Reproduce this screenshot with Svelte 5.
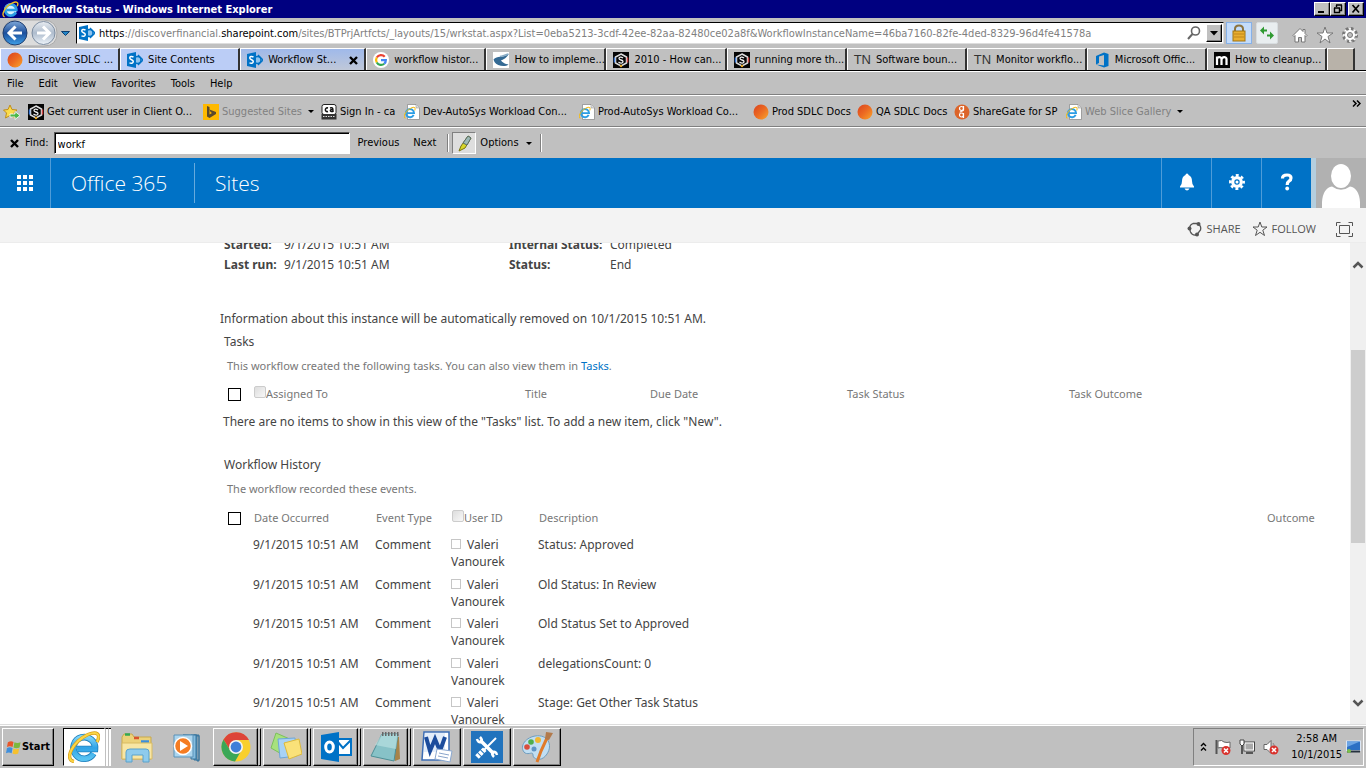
<script>
  const tabs = [
    { icon: 'orb', label: 'Discover SDLC ...', kind: 'blue' },
    { icon: 'sp', label: 'Site Contents', kind: 'blue' },
    { icon: 'sp', label: 'Workflow St...', kind: 'active' },
    { icon: 'google', label: 'workflow histor...', kind: 'pink' },
    { icon: 'bird', label: 'How to impleme...', kind: 'pink' },
    { icon: 'hex', label: '2010 - How can...', kind: 'pink' },
    { icon: 'hex', label: 'running more th...', kind: 'pink' },
    { icon: 'tn', label: 'Software boun...', kind: 'pink' },
    { icon: 'tn', label: 'Monitor workflo...', kind: 'pink' },
    { icon: 'office', label: 'Microsoft Offic...', kind: 'pink' },
    { icon: 'm', label: 'How to cleanup...', kind: 'pink' }
  ];
  const menus = ['File', 'Edit', 'View', 'Favorites', 'Tools', 'Help'];
  const favorites = [
    { icon: 'hex', label: 'Get current user in Client O...', w: 164 },
    { icon: 'bing', label: 'Suggested Sites', dim: true, menu: true, w: 107 },
    { icon: 'ca', label: 'Sign In - ca', w: 72 },
    { icon: 'page', label: 'Dev-AutoSys Workload Con...', w: 164 },
    { icon: 'page', label: 'Prod-AutoSys Workload Co...', w: 163 },
    { icon: 'orb', label: 'Prod SDLC Docs', w: 93 },
    { icon: 'orb', label: 'QA SDLC Docs', w: 86 },
    { icon: 'gate', label: 'ShareGate for SP', w: 101 },
    { icon: 'page', label: 'Web Slice Gallery', dim: true, menu: true, w: 112 }
  ];
  const events = ['Status: Approved', 'Old Status: In Review', 'Old Status Set to Approved', 'delegationsCount: 0', 'Stage: Get Other Task Status'];
  const taskbar = [
    { name: 'Internet Explorer', icon: 'ie', state: 'on', stack: 2 },
    { name: 'Explorer', icon: 'folder', state: 'flat', stack: 0 },
    { name: 'Media Player', icon: 'media', state: 'flat', stack: 0 },
    { name: 'Chrome', icon: 'chrome', state: 'up', stack: 1 },
    { name: 'Sticky Notes', icon: 'notes', state: 'up', stack: 1 },
    { name: 'Outlook', icon: 'outlook', state: 'up', stack: 1 },
    { name: 'Notepad', icon: 'notepad', state: 'up', stack: 1 },
    { name: 'Word', icon: 'word', state: 'up', stack: 0 },
    { name: 'Tools', icon: 'tools', state: 'up', stack: 0 },
    { name: 'Paint', icon: 'paint', state: 'up', stack: 0 }
  ];
  const scroll = { top: 16, size: 49 };
  let find = $state('workf');
</script>

{#snippet ieMark()}
  <path d="M26 21.500 A10.500 10.500 0 1 1 27 17 L9 17" fill="none" stroke="#2b9de4" stroke-width="5" />
  <path d="M5 30 C-3 28 5 10 20 3.500 C28 0 32 3 28.500 10" fill="none" stroke="#f4bd1c" stroke-width="2.600" />
{/snippet}

{#snippet glyph(name, size)}
  <svg class="glyph" width={size} height={size} viewBox="0 0 32 32" aria-hidden="true">
    {#if name === 'orb'}
      <defs><linearGradient id="orb" x1="0" y1="0" x2="1" y2="1"><stop offset="0" stop-color="#d9421f" /><stop offset=".5" stop-color="#ec6a22" /><stop offset="1" stop-color="#f9a62c" /></linearGradient></defs>
      <circle cx="16" cy="16" r="15" fill="url(#orb)" />
    {:else if name === 'sp'}
      <path d="M17 6 L31 16 L17 26Z" fill="#8fc4ee" /><circle cx="21" cy="16" r="7" fill="none" stroke="#0072c6" stroke-width="3" /><path d="M22 6 L32 16 L22 26" fill="none" stroke="#0072c6" stroke-width="2.6" />
      <path d="M0 4 L18 0 V32 L0 28Z" fill="#0072c6" /><path d="M13 10 C9 8 5.500 9 5.500 12 C5.500 16 12.500 15 12.500 19 C12.500 23 8 23.500 5 21.500" fill="none" stroke="#fff" stroke-width="3" />
    {:else if name === 'google'}
      <circle cx="16" cy="16" r="16" fill="#fff" />
      <g fill="none" stroke-width="4.500"><path d="M23.500 9.500 A10 10 0 0 0 7.500 11" stroke="#ea4335" /><path d="M7.500 11 A10 10 0 0 0 7.500 21" stroke="#fbbc05" /><path d="M7.500 21 A10 10 0 0 0 22.500 23.500" stroke="#34a853" /><path d="M22.500 23.500 A10 10 0 0 0 25.700 16 H16" stroke="#4285f4" /></g>
    {:else if name === 'bird'}
      <rect width="32" height="32" fill="#fff" /><path d="M1 15 C8 6 20 13 31 4 C28 12 20 15 16 17 C22 24 28 24 31 25 C24 31 8 28 3 20Z" fill="#346a94" /><path d="M14 9 C20 7 26 6 31 4" stroke="#87abc5" stroke-width="3" fill="none" />
    {:else if name === 'hex'}
      <rect width="32" height="32" fill="#050505" /><path d="M16 4 L27 10 V22 L16 28 L5 22 V10Z" fill="none" stroke="#ddd" stroke-width="3" /><path d="M20 12 C16 9 12 10 12 13 C12 17 20 15 20 19 C20 23 15 23 11 20" fill="none" stroke="#eee" stroke-width="2.600" /><path d="M3 21 V11" stroke="#3d7bd8" stroke-width="3" /><path d="M29 21 V11" stroke="#cf4444" stroke-width="3" /><circle cx="16" cy="28" r="2.500" fill="#e5a623" />
    {:else if name === 'office'}
      <path d="M4 8 L20 1 L29 4 V28 L20 31 L4 25 L20 27 V6 L10 9 V22 L4 25Z" fill="#0072c6" />
    {:else if name === 'm'}
      <rect width="32" height="32" fill="#050505" /><path d="M6 26 V9 M6 15 C6 9 15 9 15 14 V26 M15 15 C16 9 25 9 25 14 V26" stroke="#fff" stroke-width="4.500" fill="none" />
    {:else if name === 'bing'}
      <rect width="32" height="32" fill="#ffb900" /><path d="M8 4 L13 6 V21 L18 18 L15 16 L13 11 L26 16 V20 L13 28 L8 25Z" fill="#5b4a2c" />
    {:else if name === 'ca'}
      <rect x="2" y="1" width="28" height="20" rx="4" fill="#fff" stroke="#222" stroke-width="2" /><path d="M14 8 C7 6 7 17 14 15 M18 8 C24 6 24 9 24 16 M24 11 C17 10 17 16 24 15" fill="none" stroke="#111" stroke-width="3" /><path d="M1 20 H31 V31 H1Z" fill="#333" /><path d="M4 25 H28" stroke="#ddd" stroke-width="2" stroke-dasharray="3 2" />
    {:else if name === 'page'}
      <path d="M7 1 H24 L31 8 V31 H7Z" fill="#fff" stroke="#8a8a8a" stroke-width="1.500" /><path d="M24 1 V8 H31" fill="#ddd" stroke="#8a8a8a" /><g transform="translate(-1 5) scale(.78)">{@render ieMark()}</g>
    {:else if name === 'gate'}
      <circle cx="16" cy="16" r="15" fill="#dc6429" /><g fill="none" stroke="#fff" stroke-width="2.400"><circle cx="15" cy="9" r="4" /><circle cx="15" cy="22" r="4" /><path d="M19 4 V12 C19 15 12 14 12 17 M19 18 V28" /></g>
    {:else if name === 'ie'}
      <defs><linearGradient id="ieblue" x1="0" y1="0" x2="0" y2="1"><stop offset="0" stop-color="#7fd4f8" /><stop offset=".5" stop-color="#2fa3e6" /><stop offset="1" stop-color="#58c3f2" /></linearGradient></defs>
      <path d="M25.500 22.500 A10.800 10.800 0 1 1 27 18 L9 18" fill="none" stroke="#1d7fbd" stroke-width="6.600" />
      <path d="M25.500 22.500 A10.800 10.800 0 1 1 27 18.010 L9 18" fill="none" stroke="url(#ieblue)" stroke-width="5" />
      <path d="M6 30.500 C-4 29 4 11 20 3.500 C29 0 33 3 29 11" fill="none" stroke="#d99c14" stroke-width="3.400" />
      <path d="M6 30.500 C-4 29 4 11 20 3.500 C29 0 33 3 29 11" fill="none" stroke="#fbd545" stroke-width="2" />
    {:else if name === 'folder'}
      <path d="M1 6 L3 3 H11 L13 6 H30 V28 H1Z" fill="#ecd27a" stroke="#c8a94c" /><path d="M4 3.500 H9" stroke="#34a853" stroke-width="2.500" /><path d="M13 7 H18" stroke="#d9532c" stroke-width="2.500" /><path d="M20 10.500 H28" stroke="#3b8ede" stroke-width="2.500" /><path d="M1 12 H31 V28 H1Z" fill="#f8e6a4" stroke="#d8bb62" /><path d="M5 31 V21 Q5 18 9 18 H25 Q28 18 28 21 V31 H22 V24 H11 V31Z" fill="#8ecbec" stroke="#5ba2cc" />
    {:else if name === 'media'}
      <path d="M12 4 H26 V30 L28 30 V5Z M23 4 H28 V29 H23Z" fill="#5d9cc8" stroke="#39749c" /><path d="M20 4 H25 V28 H20Z" fill="#85bde0" stroke="#39749c" /><path d="M3 4 H22 V26 H3Z" fill="#acd5ee" stroke="#5b92b8" /><circle cx="12" cy="15" r="8.500" fill="#f57c22" stroke="#fff" stroke-width="1.500" /><path d="M9 10 L17 15 L9 20Z" fill="#fff" />
    {:else if name === 'chrome'}
      <circle cx="16" cy="16" r="14.500" fill="#f9cf2c" /><path d="M16 16 L3.500 8.500 A14.500 14.500 0 0 1 29 9 H16Z" fill="#dd4438" /><path d="M3.500 8.500 L10 19 L16 9Z" fill="#dd4438" /><path d="M10 19 L3.500 8.500 A14.500 14.500 0 0 0 15 30.500 L21 20Z" fill="#3aa757" /><circle cx="16" cy="16" r="7" fill="#f4f4f4" /><circle cx="16" cy="16" r="5.400" fill="#3f7fd8" />
    {:else if name === 'notes'}
      <path d="M6 2 L22 9 L15 25 L1 17Z" fill="#a7e17d" stroke="#7cc05c" /><path d="M8 8 L25 7 L27 25 L10 27Z" fill="#a8d2f5" stroke="#6da7d8" /><path d="M14 12 L29 8 L32 23 L19 28Z" fill="#fae179" stroke="#ddb93c" />
    {:else if name === 'outlook'}
      <path d="M17 8 H31 V24 H17Z" fill="#fff" stroke="#0072c6" stroke-width="2" /><path d="M17 10 L23 17 L31 9" fill="none" stroke="#0072c6" stroke-width="2" /><path d="M1 4 L19 1 V31 L1 28Z" fill="#0072c6" /><ellipse cx="9.500" cy="16" rx="3.800" ry="5" fill="none" stroke="#fff" stroke-width="3" />
    {:else if name === 'notepad'}
      <path d="M12 3 L29 6 L30 28 L25 30Z" fill="#a78348" /><path d="M12 3 H28 L24 30 L1 25Z" fill="#87c2c7" stroke="#4d8f96" /><path d="M12 3 H28 L26 18 L5 14Z" fill="#bfe4e5" opacity=".6" /><path d="M12 3 H29" stroke="#666" stroke-width="4" stroke-dasharray="1.500 1.500" />
    {:else if name === 'word'}
      <path d="M3 1 H28 V29 H1Z" fill="#fff" stroke="#3c6db5" stroke-width="1.500" /><path d="M4 2 H24 V21 H3Z" fill="#e3edfa" /><path d="M5 6 L9 20 L14 8 L19 20 L24 6" fill="none" stroke="#1c4c9c" stroke-width="4" /><path d="M16 18 L31 20 L29 31 L14 28Z" fill="#fff" stroke="#89a7d0" /><path d="M18 22 L28 24 M17 25 L27 27" stroke="#8aa5cb" />
    {:else if name === 'tools'}
      <rect width="32" height="32" fill="#2173bd" /><path d="M9 9 L23 23" stroke="#fff" stroke-width="3.500" /><path d="M25 7 L13 19" stroke="#fff" stroke-width="2" /><path d="M6 26 L14 18" stroke="#fff" stroke-width="5" stroke-dasharray="3 1" /><path d="M6 8 Q7 12 10 11 Q12 9 9 6" fill="none" stroke="#fff" stroke-width="2.500" /><path d="M26 24 Q25 20 22 21 Q20 23 23 26" fill="none" stroke="#fff" stroke-width="2.500" />
    {:else if name === 'paint'}
      <path d="M14 5 C27 3 32 14 26 23 C21 31 12 29 12 24 C12 20 8 24 4 22 C-2 17 3 7 14 5Z" fill="#c1def2" stroke="#6f9dbf" /><circle cx="6" cy="16" r="2.800" fill="#d94e3c" /><circle cx="10" cy="11" r="2.800" fill="#4fae4d" /><circle cx="17" cy="9" r="3" fill="#f1b732" /><circle cx="13" cy="18" r="2.500" fill="#5f94c6" /><path d="M16 31 L20 20 L26 7" stroke="#e07b2a" stroke-width="3" fill="none" /><path d="M24 8 L25 1 L32 2 L28 9Z" fill="#b27a4c" />
    {/if}
  </svg>
{/snippet}

<div class="screen">
  <header class="titlebar">
    <svg width="17" height="17" viewBox="0 0 32 32" aria-hidden="true"><circle cx="16" cy="16" r="12" fill="#d8f2fd" />{@render ieMark()}</svg>
    <h1>Workflow Status - Windows Internet Explorer</h1>
    <div class="winbtns">
      <button class="raised" aria-label="Minimize"><svg width="12" height="10" viewBox="0 0 12 10"><path d="M2 8 H8" stroke="#000" stroke-width="2" /></svg></button>
      <button class="raised" aria-label="Restore"><svg width="12" height="10" viewBox="0 0 12 10"><path d="M4 1 H10 M4.500 1 V3 M9.500 1 V6.500 H8 M2 4 H8 M2.500 4 V8.500 H7.500 V4" fill="none" stroke="#000" stroke-width="1.400" /></svg></button>
      <button class="raised close" aria-label="Close"><svg width="12" height="10" viewBox="0 0 12 10"><path d="M2.500 1 L9 8.500 M9 1 L2.500 8.500" stroke="#000" stroke-width="1.700" /></svg></button>
    </div>
  </header>

  <div class="address">
    <svg class="nav" width="72" height="30" viewBox="0 0 72 30" aria-hidden="true">
      <defs>
        <linearGradient id="back" x1="0" y1="0" x2="0" y2="1"><stop offset="0" stop-color="#7fa8d8" /><stop offset=".5" stop-color="#1c4f9c" /><stop offset="1" stop-color="#3ea0e8" /></linearGradient>
        <linearGradient id="fwd" x1="0" y1="0" x2="0" y2="1"><stop offset="0" stop-color="#e8ecf1" /><stop offset=".5" stop-color="#aebccd" /><stop offset="1" stop-color="#eef4fa" /></linearGradient>
      </defs>
      <path d="M13 2 H42 Q55 3 55 15 Q55 28 42 28 H13 Q1 27 1 15 Q1 3 13 2Z" fill="#dcdcdc" stroke="#aaa" />
      <circle cx="13" cy="15" r="12" fill="url(#back)" stroke="#203f70" />
      <path d="M13.500 8.500 L7 15 L13.500 21.500 M7.500 15 H20" fill="none" stroke="#fff" stroke-width="3" />
      <circle cx="41.500" cy="15" r="11.500" fill="url(#fwd)" stroke="#7e8ea2" />
      <path d="M41 8.500 L47.500 15 L41 21.500 M47 15 H35" fill="none" stroke="#fff" stroke-width="3" />
      <path d="M59.500 13.500 H67.500 L63.500 17.500Z" fill="#2386c8" stroke="#0d3f70" />
    </svg>
    <div class="urlbox">
      {@render glyph('sp', 16)}
      <div class="url" role="textbox" tabindex="0" aria-label="Address"><b>https</b>://discoverfinancial.<b>sharepoint.com</b>/sites/BTPrjArtfcts/_layouts/15/wrkstat.aspx?List=0eba5213-3cdf-42ee-82aa-82480ce02a8f&amp;WorkflowInstanceName=46ba7160-82fe-4ded-8329-96d4fe41578a</div>
      <svg width="16" height="16" viewBox="0 0 16 16" aria-hidden="true"><circle cx="9.500" cy="6" r="4" fill="none" stroke="#666" stroke-width="1.600" /><path d="M6.500 9 L2 14" stroke="#666" stroke-width="2" /></svg>
      <button class="raised drop" aria-label="Address list"><svg width="8" height="5" viewBox="0 0 8 5"><path d="M0 0 H8 L4 4.500Z" /></svg></button>
    </div>
    <button class="lock" aria-label="Security report"><svg width="16" height="18" viewBox="0 0 16 18"><path d="M4 9 V5 Q4 1.500 8 1.500 Q12 1.500 12 5 V9" fill="none" stroke="#8c7440" stroke-width="2" /><rect x="2" y="7" width="12" height="10" fill="#e9ae2f" stroke="#a07415" /><path d="M3 10 H13 M3 13 H13" stroke="#c0851a" /></svg></button>
    <button class="refresh" aria-label="Refresh"><svg width="16" height="16" viewBox="0 0 16 16"><path d="M1 5.500 L5 1.500 V4.500 H8 V6.500 H5 V9.500Z" fill="#2f9a32" /><path d="M15 10.500 L11 6.500 V9.500 H8 V11.500 H11 V14.500Z" fill="#2f9a32" /></svg></button>
    <div class="ietools">
      <svg width="16" height="16" viewBox="0 0 16 16"><path d="M1 8.500 L8 1.500 L11 4.500 V2.500 H13 V6.500 L15 8.500 L14 9.500 L13 8.500 V15 H9.500 V10.500 H6.500 V15 H3 V8.500 L2 9.500Z" fill="#fff" stroke="#777" /></svg>
      <svg width="18" height="18" viewBox="0 0 18 18"><path d="M9 1 L11 7 H17 L12 10.500 L14 17 L9 13 L4 17 L6 10.500 L1 7 H7Z" fill="#fff" stroke="#777" /></svg>
      <svg width="16" height="16" viewBox="0 0 16 16"><circle cx="8" cy="8" r="6.500" fill="none" stroke="#777" stroke-width="3" stroke-dasharray="2.600 2.500" /><circle cx="8" cy="8" r="5.600" fill="#fff" stroke="#777" /><path d="M8 1 V4 M8 12 V15 M1 8 H4 M12 8 H15 M3 3 L5 5 M11 11 L13 13 M3 13 L5 11 M11 5 L13 3" stroke="#fff" stroke-width="1.600" /><circle cx="8" cy="8" r="2.500" fill="#c0c0c0" stroke="#777" /></svg>
    </div>
  </div>

  <div class="tabs" role="tablist">
    {#each tabs as t}
      <button class="tab {t.kind}" role="tab" aria-selected={t.kind === 'active'}>
        {#if t.icon === 'tn'}<span class="tn">TN</span>{:else}{@render glyph(t.icon, 16)}{/if}
        <span class="tablabel">{t.label}</span>
        {#if t.kind === 'active'}<svg width="9" height="9" viewBox="0 0 9 9"><path d="M1 1 L8 8 M8 1 L1 8" stroke="#000" stroke-width="2.400" /></svg>{/if}
      </button>
    {/each}
    <button class="tab new" aria-label="New tab"></button>
  </div>

  <nav class="menubar">
    {#each menus as m}<button>{m}</button>{/each}
  </nav>

  <div class="favbar">
    <svg width="18" height="16" viewBox="0 0 18 16" aria-hidden="true"><path d="M7 1 L9 5.500 L14 6 L10.500 9 L11.500 14 L7 11.500 L2.500 14 L3.500 9 L0.500 6 L5 5.500Z" fill="#fbdc49" stroke="#c08e1c" /><path d="M7 10 H12 V7.500 L17 11.500 L12 15.500 V13 H7Z" fill="#4db848" stroke="#fff" stroke-width=".8" /></svg>
    {#each favorites as f}
      <a href="#top" class:dim={f.dim} style="width:{f.w}px">{@render glyph(f.icon, 16)}<span>{f.label}</span>{#if f.menu}<i class="caret"></i>{/if}</a>
    {/each}
    <svg class="more" width="9" height="7" viewBox="0 0 9 7" aria-hidden="true"><path d="M1 0.500 L4 3.500 L1 6.500 M5 0.500 L8 3.500 L5 6.500" fill="none" stroke="#000" stroke-width="1.500" /></svg>
  </div>

  <div class="findbar">
    <button aria-label="Close find bar"><svg width="9" height="9" viewBox="0 0 9 9"><path d="M1 1 L8 8 M8 1 L1 8" stroke="#000" stroke-width="2.400" /></svg></button>
    <label for="find">Find:</label>
    <input id="find" type="text" bind:value={find} />
    <button class="prev">Previous</button>
    <button class="next">Next</button>
    <i class="sep"></i>
    <button class="marker" aria-label="Highlight all matches"><svg width="18" height="18" viewBox="0 0 18 18"><path d="M4 17 L6 12 L13 2 L16 4 L10 14Z" fill="#d8d629" stroke="#77740f" /><path d="M8 9 L13 2 L16 4 L12 11Z" fill="#9db9b5" stroke="#586c68" /></svg></button>
    <button class="options">Options<i class="caret"></i></button>
    <i class="sep last"></i>
  </div>

  <div class="suite">
    <button class="waffle" aria-label="App launcher"><svg width="16" height="16" viewBox="0 0 16 16" fill="#fff"><path d="M0 0h4v4H0zM6 0h4v4H6zM12 0h4v4h-4zM0 6h4v4H0zM6 6h4v4H6zM12 6h4v4h-4zM0 12h4v4H0zM6 12h4v4H6zM12 12h4v4h-4z" /></svg></button>
    <a class="brand" href="#top">Office 365</a>
    <a class="site" href="#top">Sites</a>
    <div class="suitebtns">
      <button aria-label="Notifications"><svg width="16" height="18" viewBox="0 0 16 18" fill="#fff"><path d="M8 0.500 Q9.500 0.500 9.500 2 Q13 3.500 13 8 Q13 12 15 13.500 V14.500 H1 V13.500 Q3 12 3 8 Q3 3.500 6.500 2 Q6.500 0.500 8 0.500ZM5.500 15.500 H10.500 Q9.500 17.500 8 17.500 Q6.500 17.500 5.500 15.500Z" /></svg></button>
      <button aria-label="Settings"><svg width="16" height="16" viewBox="0 0 16 16"><circle cx="8" cy="8" r="4.300" fill="none" stroke="#fff" stroke-width="3.200" /><circle cx="8" cy="8" r="6.700" fill="none" stroke="#fff" stroke-width="2.500" stroke-dasharray="2.900 2.360" stroke-dashoffset="1.400" /><circle cx="8" cy="8" r="1.500" fill="#fff" /></svg></button>
      <button aria-label="Help"><svg width="14" height="18" viewBox="0 0 14 18"><path d="M2.500 5.500 Q2.500 2 7 2 Q11 2 11 5 Q11 7 9 8.200 Q7.200 9.300 7.200 12" fill="none" stroke="#fff" stroke-width="3.200" /><circle cx="7.200" cy="15.500" r="1.900" fill="#fff" /></svg></button>
    </div>
    <button class="avatar" aria-label="Account"><svg width="50" height="50" viewBox="0 0 50 50"><rect width="50" height="50" fill="#b1b1b1" /><path d="M6 50 V44 Q7 30 16 28.500 Q25 35 34 28.500 Q43 30 44 44 V50Z" fill="#fff" /><ellipse cx="25" cy="18" rx="10" ry="12" fill="#fff" /></svg></button>
  </div>

  <div class="ribbon">
    <button class="share"><svg width="16" height="16" viewBox="0 0 16 16"><path d="M2.500 7 Q3 3.500 6 2.500 L10 2.500 M11.500 3 Q14.500 5.500 13.500 9 L10 13.500 M9 14 Q5 14.500 3.500 11 L2.500 7.500" fill="none" stroke="#555" stroke-width="1.300" /><g fill="#555"><circle cx="11.500" cy="3" r="2" /><circle cx="2.500" cy="7.500" r="2" /><circle cx="10" cy="13.500" r="2" /></g></svg>SHARE</button>
    <button class="follow"><svg width="16" height="16" viewBox="0 0 16 16"><path d="M8 1 L9.800 6 H15 L10.800 9.200 L12.500 14.500 L8 11.300 L3.500 14.500 L5.200 9.200 L1 6 H6.200Z" fill="none" stroke="#555" /></svg>FOLLOW</button>
    <button class="focus" aria-label="Focus on content"><svg width="17" height="15" viewBox="0 0 17 15"><path d="M0.500 4 V0.500 H4.500 M12.500 0.500 H16.500 V4 M16.500 11 V14.500 H12.500 M4.500 14.500 H0.500 V11 M3.500 3.500 H13.500 V11.500 H3.500Z" fill="none" stroke="#555" /></svg></button>
  </div>

  <div class="page">
    <main>
      <table class="details">
        <tbody>
          <tr><th>Started:</th><td>9/1/2015 10:51 AM</td><th>Internal Status:</th><td>Completed</td></tr>
          <tr><th>Last run:</th><td>9/1/2015 10:51 AM</td><th>Status:</th><td>End</td></tr>
        </tbody>
      </table>
      <p class="info">Information about this instance will be automatically removed on 10/1/2015 10:51 AM.</p>

      <h2>Tasks</h2>
      <p class="desc">This workflow created the following tasks. You can also view them in <a href="#top">Tasks</a>.</p>
      <table class="list tasks">
        <colgroup><col class="c-check" /><col class="c-assigned" /><col class="c-title" /><col class="c-due" /><col class="c-status" /><col /></colgroup>
        <thead>
          <tr><th><input type="checkbox" aria-label="Select all tasks" /></th><th><input type="checkbox" disabled aria-label="Presence" />Assigned To</th><th>Title</th><th>Due Date</th><th>Task Status</th><th>Task Outcome</th></tr>
        </thead>
      </table>
      <p class="empty">There are no items to show in this view of the "Tasks" list. To add a new item, click "New".</p>

      <h2>Workflow History</h2>
      <p class="desc">The workflow recorded these events.</p>
      <table class="list history">
        <colgroup><col class="c-check" /><col class="c-date" /><col class="c-type" /><col class="c-user" /><col /><col class="c-outcome" /></colgroup>
        <thead>
          <tr><th><input type="checkbox" aria-label="Select all events" /></th><th>Date Occurred</th><th>Event Type</th><th><input type="checkbox" disabled aria-label="Presence" />User ID</th><th>Description</th><th>Outcome</th></tr>
        </thead>
        <tbody>
          {#each events as e}
            <tr><td></td><td>9/1/2015 10:51 AM</td><td>Comment</td><td><i class="presence"></i>Valeri Vanourek</td><td>{e}</td><td></td></tr>
          {/each}
        </tbody>
      </table>
    </main>
    <div class="scrollbar">
      <svg width="12" height="8" viewBox="0 0 12 8"><path d="M1.500 6.500 L6 2 L10.500 6.500" fill="none" stroke="#555" stroke-width="2.500" /></svg>
      <div class="track"><div class="thumb" style="top:{scroll.top}%;height:{scroll.size}%"></div></div>
      <svg width="12" height="8" viewBox="0 0 12 8"><path d="M1.500 1.500 L6 6 L10.500 1.500" fill="none" stroke="#555" stroke-width="2.500" /></svg>
    </div>
  </div>

  <footer class="taskbar">
    <button class="start raised"><svg width="15" height="15" viewBox="0 0 16 16"><path d="M2 2.500 Q5 0.500 8 2 L7 7.500 Q4 6 1 7.500Z" fill="#e8562a" /><path d="M9 2.500 Q12 4 15.500 2.500 L14.500 8 Q11 9.500 8 8Z" fill="#7cb83e" /><path d="M1 8.500 Q4 7 7 8.500 L6 14 Q3 12.500 0 14Z" fill="#3f8fdc" /><path d="M8 9 Q11 10.500 14 9 L13 14.500 Q10 16 7 14.500Z" fill="#f6c12e" /></svg>Start</button>
    {#each taskbar as b}
      <button class="app {b.state}" aria-label={b.name}>
        <span class="face">{@render glyph(b.icon, 32)}</span>
        {#each { length: b.stack } as _}<i></i>{/each}
      </button>
    {/each}
    <div class="tray">
      <svg width="7" height="10" viewBox="0 0 7 10"><path d="M1 4 L3.500 1.500 L6 4 M1 8.500 L3.500 6 L6 8.500" fill="none" stroke="#000" stroke-width="1.400" /></svg>
      <svg width="16" height="16" viewBox="0 0 16 16"><path d="M1.500 1 V15" stroke="#555" stroke-width="2" /><path d="M3 2 Q7 0.500 9 3 Q12 4 15 3 V9 Q11 11 8 9 Q5 8 3 9Z" fill="#fff" stroke="#666" /><circle cx="11" cy="11.500" r="4.500" fill="#d9332e" /><path d="M9 9.500 L13 13.500 M13 9.500 L9 13.500" stroke="#fff" stroke-width="1.600" /></svg>
      <svg width="16" height="16" viewBox="0 0 16 16"><rect x="5" y="3.500" width="10" height="8" fill="#a9a9a9" /><rect x="5" y="3" width="10.500" height="9" fill="none" stroke="#444" /><rect x="6" y="4" width="8.500" height="7" fill="none" stroke="#fff" /><path d="M7 14 H14" stroke="#555" stroke-width="2" /><path d="M1 1 H5 V5 L3 7 L1 5Z" fill="#fff" stroke="#444" /><path d="M3 7 V15" stroke="#333" stroke-width="1.500" /></svg>
      <svg width="16" height="16" viewBox="0 0 16 16"><path d="M1 5.500 H4 L8 1.500 V14.500 L4 10.500 H1Z" fill="#fff" stroke="#666" /><path d="M10 4 Q12 6 11 9" fill="none" stroke="#888" /><circle cx="11" cy="11" r="4.500" fill="#d9332e" /><path d="M9 9 L13 13 M13 9 L9 13" stroke="#fff" stroke-width="1.600" /></svg>
      <div class="clock"><span>2:58 AM</span><span>10/1/2015</span></div>
      <svg width="15" height="14" viewBox="0 0 15 14"><rect x="0.500" y="1" width="14" height="9.500" fill="#2b6fc4" stroke="#dbe6f4" /><path d="M1 1.500 H14 L1 7Z" fill="#6ba4e4" /><path d="M1 10.500 H14 V12.500 H1Z" fill="#26323f" /><circle cx="3" cy="11" r="2" fill="#7bc24a" /></svg>
    </div>
  </footer>
</div>

<style>
  :global(body) { margin: 0; }
  .screen { height: 100vh; display: flex; flex-direction: column; overflow: hidden; background: #fff; font-family: "DejaVu Sans Condensed", "DejaVu Sans", sans-serif; font-size: 11px; line-height: 16px; color: #000; }
  .screen > * { flex: none; }
  button { font: inherit; color: inherit; background: none; border: 0; padding: 0; display: flex; align-items: center; justify-content: center; white-space: nowrap; }
  a { color: inherit; text-decoration: none; }
  svg { flex: none; display: block; }
  h1, h2, p { margin: 0; font: inherit; }
  .raised { background: #c0c0c0; border: 1px solid; border-color: #fff #000 #000 #fff; box-shadow: inset -1px -1px #808080; }

  .titlebar { height: 18px; background: #000080; color: #fff; display: flex; align-items: center; gap: 1px; padding: 0 2px; }
  h1 { flex: 1; padding-top: 1px; font-weight: bold; white-space: nowrap; }
  .winbtns { display: flex; }
  .winbtns button { width: 16px; height: 14px; box-sizing: border-box; }
  .winbtns .close { margin-left: 2px; }

  .address { height: 30px; background: #c0c0c0; display: flex; align-items: center; padding-left: 2px; }
  .urlbox { flex: 1; min-width: 0; margin-left: 2px; height: 22px; box-sizing: border-box; background: #fff; border: 1px solid #000; border-right-color: #ddd; border-bottom-color: #ddd; display: flex; align-items: center; gap: 4px; padding-left: 2px; }
  .url { flex: 1; min-width: 0; padding-top: 2px; overflow: hidden; white-space: nowrap; color: #808080; }
  .url b { font-weight: normal; color: #000; }
  .drop { width: 16px; height: 18px; margin-right: 1px; }
  .lock { width: 26px; height: 22px; box-sizing: border-box; margin-left: 2px; background: #c4dcfb; border: 1px solid #86b1e8; }
  .refresh { width: 22px; height: 22px; box-sizing: border-box; margin-left: 4px; background: #e9eef0; border: 1px solid #d8dde0; border-radius: 2px; }
  .ietools { display: flex; align-items: center; gap: 8px; margin: 4px 8px 0 14px; }

  .tabs { height: 23px; box-sizing: border-box; display: flex; background: #c0c0c0; border-bottom: 1px solid #000; padding-right: 11px; }
  .tab { flex: 1 1 0; min-width: 0; box-sizing: border-box; border: 1px solid #fff; border-right: 2px solid #333; border-bottom: 0; padding: 1px 0 0 6px; gap: 5px; justify-content: flex-start; }
  .tab .tablabel { flex: 1; text-align: left; }
  .blue { background: #bbcdf6; }
  .active { background: linear-gradient(#9fb9ea, #c0c8d8); padding-right: 6px; }
  .new { flex: 0 0 28px; background: #b8b2a9; }
  .tn { font-family: "Liberation Sans", sans-serif; font-size: 13px; color: #333; }

  .menubar { height: 24px; background: #c0c0c0; border-top: 1px solid #fff; border-bottom: 1px solid #808080; box-sizing: border-box; display: flex; align-items: center; gap: 15px; padding: 2px 0 0 7px; }
  .favbar { height: 32px; background: #c0c0c0; border-top: 1px solid #fff; border-bottom: 1px solid #808080; box-sizing: border-box; display: flex; align-items: center; padding: 1px 5px 0 3px; gap: 11px; }
  .favbar > svg:first-child { margin-right: -4px; }
  .favbar a { display: flex; align-items: center; gap: 3px; white-space: nowrap; }
  .dim { color: #808080; }
  .favbar .more { margin: 0 0 16px auto; }
  .caret { width: 0; height: 0; border: 3px solid transparent; border-top-color: #000; border-bottom: 0; margin-left: 3px; }
  .findbar { height: 31px; background: #c0c0c0; border-top: 1px solid #fff; box-sizing: border-box; display: flex; align-items: center; padding-left: 10px; }
  .findbar label { margin: 0 5px 0 6px; }
  .findbar input { width: 296px; height: 22px; box-sizing: border-box; border: 1px solid; border-color: #555 #fff #fff #555; box-shadow: inset 1px 1px #000; background: #fff; padding: 4px 2px 2px 3px; font: inherit; }
  .prev { margin-left: 8px; }
  .next { margin: 0 11px 0 14px; }
  .sep { width: 1px; height: 18px; background: #808080; border-right: 1px solid #fff; }
  .marker { width: 24px; height: 22px; box-sizing: border-box; margin: 0 4px 0 3px; border: 1px solid; border-color: #808080 #fff #fff #808080; background: #dedede; }
  .options { gap: 4px; }
  .sep.last { margin-left: 8px; }

  .suite { height: 50px; background: #0072c6; color: #fff; display: flex; align-items: center; font-family: "Open Sans", sans-serif; font-weight: 300; font-size: 21px; line-height: 40px; }
  .waffle { width: 51px; height: 50px; box-sizing: border-box; border-right: 1px solid #4e9cd8; }
  .brand { box-sizing: border-box; width: 144px; padding-left: 20px; border-right: 1px solid #66aadd; }
  .site { padding-left: 20px; flex: 1; }
  .suitebtns { display: flex; }
  .suitebtns button { width: 50px; height: 50px; box-sizing: border-box; border-left: 1px solid #4e9cd8; padding-bottom: 2px; }
  .avatar { border-left: 5px solid #b5cfdf; }

  .ribbon { height: 35px; box-sizing: border-box; background: #f3f3f3; border-bottom: 1px solid #ececec; display: flex; align-items: center; justify-content: flex-end; padding: 8px 13px 0 0; color: #555; font-family: "Open Sans", sans-serif; font-size: 11px; }
  .share, .follow { gap: 4px; }
  .follow { margin-left: 11px; }
  .focus { margin-left: 20px; }

  .screen > .page { flex: 1; min-height: 0; display: flex; font-family: "Noto Sans", sans-serif; font-size: 12px; line-height: 20px; color: #444; }
  main { flex: 1; min-width: 0; overflow: hidden; padding-left: 220px; }
  table { border-collapse: collapse; table-layout: fixed; }
  th, td { padding: 0; text-align: left; vertical-align: top; white-space: nowrap; }
  .details { margin: -8px 0 0 4px; width: 500px; }
  .details th { width: 60px; }
  .details td { width: 225px; }
  .details th:nth-child(3) { width: 101px; }
  .info { padding-top: 34px; }
  h2 { padding: 3px 0 0 4px; }
  .desc { padding: 4px 0 0 7px; font-size: 11px; color: #777; }
  .desc a { color: #0072c6; }
  .list { width: 100%; }
  .list th { font-weight: normal; font-size: 11px; color: #777; }
  .tasks { margin-top: 8px; }
  .empty { padding: 8px 0 0 3px; }
  .empty + h2 { padding-top: 23px; }
  .history { margin-top: 9px; }
  .c-check { width: 33px; }
  .c-assigned { width: 272px; }
  .c-title { width: 125px; }
  .c-due { width: 197px; }
  .c-status { width: 222px; }
  .c-date { width: 122px; }
  .c-type { width: 76px; }
  .c-user { width: 87px; }
  .c-outcome { width: 84px; }
  .list th { padding-left: 1px; }
  .tasks th { padding-left: 0; }
  .tasks th:nth-child(-n+2) { padding-left: 1px; }
  .history td { line-height: 17px; padding-bottom: 6px; }
  .history tr:nth-child(even) td { padding-bottom: 5px; }
  .history tbody tr:first-child td { padding-top: 8px; }
  .history td:nth-child(4) { white-space: normal; padding-right: 20px; }
  input[type="checkbox"] { appearance: none; box-sizing: border-box; width: 13px; height: 13px; margin: 4px 0 0 7px; border: 1px solid #000; background: #fff; display: block; }
  input[type="checkbox"]:disabled { display: inline-block; width: 12px; height: 12px; margin: 0; border-color: #ccc; border-radius: 2px; background: linear-gradient(135deg, #ddd, #f8f8f8); }
  .presence { display: inline-block; box-sizing: border-box; width: 10px; height: 10px; border: 1px solid #c6c6c6; margin-right: 6px; }

  .scrollbar { width: 16px; background: #f0f0f0; display: flex; flex-direction: column; align-items: center; padding: 18px 0 17px; box-sizing: border-box; gap: 18px; }
  .track { flex: 1; width: 14px; position: relative; }
  .thumb { position: absolute; left: 0; right: 0; background: #cdcdcd; }

  .taskbar { height: 44px; box-sizing: border-box; background: #c0c0c0; border-top: 1px solid #ddd; box-shadow: inset 0 1px #fff; display: flex; align-items: flex-start; gap: 2px; padding: 3px 2px 0; }
  .start { width: 52px; height: 38px; box-sizing: border-box; gap: 1px; font-weight: bold; margin-right: 7px; }
  .app { width: 48px; height: 38px; align-items: stretch; justify-content: flex-start; }
  .face { flex: 1; display: flex; align-items: center; justify-content: center; border: 1px solid transparent; }
  .up .face { border-color: #fff #000 #000 #fff; box-shadow: inset -1px -1px #808080; }
  .up i { width: 3px; box-sizing: border-box; border: 1px solid; border-color: #fff #000 #000 #c0c0c0; }
  .on .face { background: #fff; border-color: #000 #fff #fff #000; }
  .on i { width: 2px; border-top: 1px solid #000; border-left: 1px solid #c0c0c0; background: #fff; }
  .tray { margin-left: auto; height: 38px; box-sizing: border-box; border: 1px solid; border-color: #808080 #fff #fff #808080; display: flex; align-items: center; gap: 8px; padding: 0 2px 0 6px; }
  .clock { display: flex; flex-direction: column; align-items: center; margin: 0 -4px 0 4px; }
</style>
